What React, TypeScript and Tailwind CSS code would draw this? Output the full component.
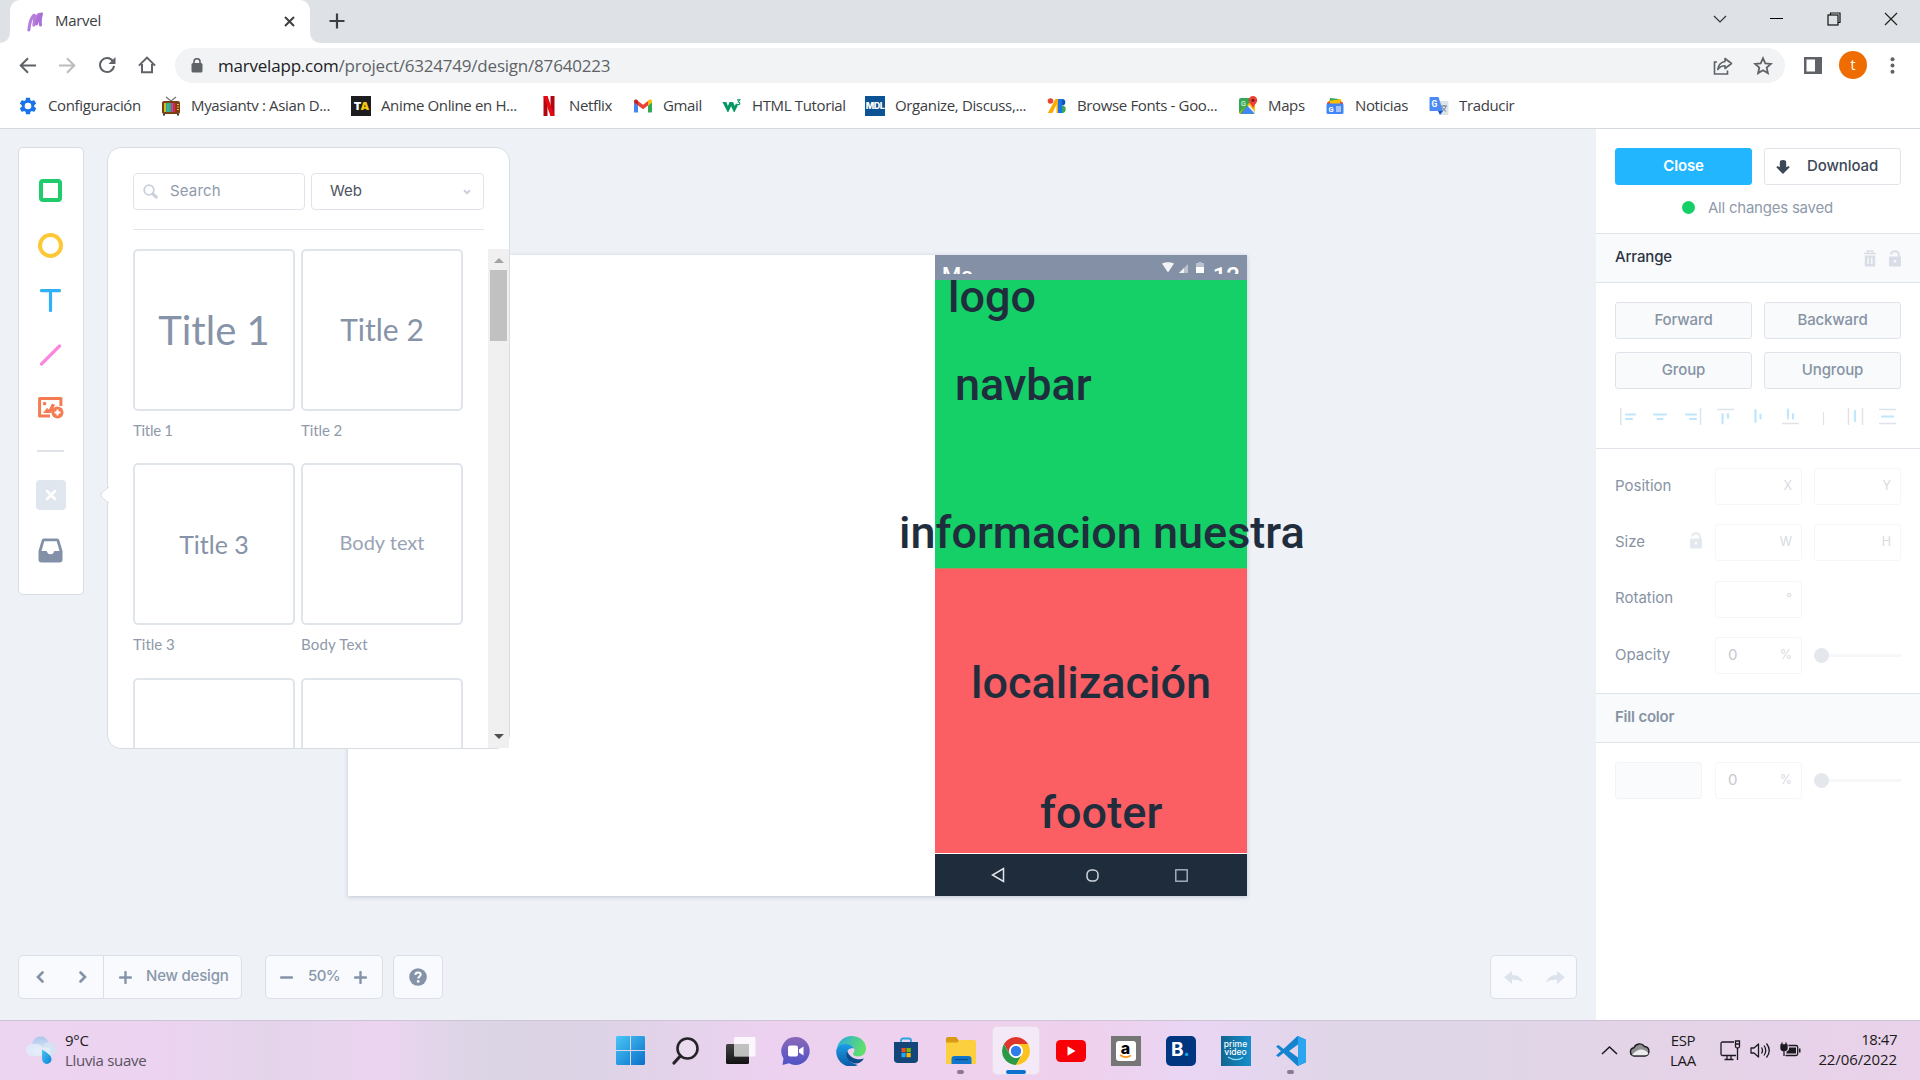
import React from "react";

type Kids = { children?: React.ReactNode };

/* ---------- bookmark icons (20x20 slot) ---------- */

const GearIcon = () => (
  <svg width="20" height="20" viewBox="0 0 24 24" fill="#1a73e8">
    <path d="M19.4 13c0-.3.1-.6.1-1s0-.7-.1-1l2.100-1.650c.2-.15.25-.42.12-.64l-2-3.460c-.12-.22-.39-.3-.61-.22l-2.490 1c-.52-.4-1.080-.73-1.690-.98l-.38-2.650A.49.49 0 0 0 14 2h-4c-.25 0-.46.18-.49.42l-.38 2.650c-.61.25-1.170.59-1.690.98l-2.490-1c-.23-.09-.49 0-.61.22l-2 3.460c-.13.22-.07.49.12.64L4.570 11c-.04.3-.07.65-.07 1s.03.7.07 1l-2.110 1.650c-.19.15-.24.42-.12.64l2 3.460c.12.22.39.3.61.22l2.490-1c.52.4 1.080.73 1.690.98l.38 2.650c.03.24.24.42.49.42h4c.25 0 .46-.18.49-.42l.38-2.650c.61-.25 1.170-.59 1.690-.98l2.490 1c.23.09.49 0 .61-.22l2-3.460c.12-.22.07-.49-.12-.64L19.400 13zM12 16a4 4 0 1 1 0-8 4 4 0 0 1 0 8z" />
  </svg>
);

const TvIcon = () => (
  <svg width="20" height="20" viewBox="0 0 20 20">
    <path d="M5 1l5 4 5-4" stroke="#777" strokeWidth="1.300" fill="none" />
    <rect x="1" y="5" width="18" height="13" rx="2" fill="#7a3f12" />
    <rect x="3" y="7" width="11.500" height="9" fill="#222" />
    <rect x="3" y="7" width="2.500" height="9" fill="#c9c417" />
    <rect x="5.500" y="7" width="2.500" height="9" fill="#27b5c8" />
    <rect x="8" y="7" width="2.200" height="9" fill="#31b54a" />
    <rect x="10.200" y="7" width="2.200" height="9" fill="#d63ad0" />
    <rect x="12.400" y="7" width="2.100" height="9" fill="#e0322c" />
    <path d="M16 8.500h2M16 11h2M16 13.500h2" stroke="#e8b04a" strokeWidth="1.200" />
    <path d="M3 18v1.500M17 18v1.500" stroke="#333" strokeWidth="2" />
  </svg>
);

const TaIcon = () => (
  <div className="flex h-5 w-5 items-center justify-center bg-[#1d1d1f] font-['Inter'] text-[11px] font-black tracking-[-1px]">
    <span className="text-white">T</span>
    <span className="text-[#f7c90f]">A</span>
  </div>
);

const NetflixIcon = () => (
  <svg width="20" height="20" viewBox="0 0 20 20">
    <path d="M4.500 0h4v20l-4 .001z" fill="#b1060f" />
    <path d="M11.500 0h4v20h-4z" fill="#b1060f" />
    <path d="M4.500 0h4l7 20h-4z" fill="#e50914" />
  </svg>
);

const GmailIcon = () => (
  <svg width="20" height="20" viewBox="0 0 20 20">
    <path d="M1 5v10.500c0 .6.400 1 1 1h3V9.500L1 6z" fill="#4285f4" />
    <path d="M19 5v10.500c0 .6-.4 1-1 1h-3V9.500l4-3.500z" fill="#34a853" />
    <path d="M5 9.500V5l5 3.800L15 5v4.500l-5 3.800z" fill="#ea4335" />
    <path d="M1 5.500C1 3.500 3 3 4.200 4L5 4.700v4.900L1 6.600z" fill="#c5221f" />
    <path d="M19 5.500c0-2-2-2.500-3.200-1.500l-.8.700v4.900l4-3z" fill="#fbbc04" />
  </svg>
);

const W3Icon = () => (
  <svg width="22" height="20" viewBox="0 0 22 20">
    <path d="M.5 5.500h4.200l1.800 4.600 1.800-4.600h3.900l1.800 4.600L15.500 7l1.800 2.700-3.500 6.800h-.8L10 10.200 7 16.500h-.9z" fill="#059862" />
    <path d="M16.500 3.300h3.200L18 5.500c2.200 0 2.200 3-.1 3-.8 0-1.400-.4-1.600-.8" fill="none" stroke="#059862" strokeWidth="1.200" />
  </svg>
);

const MdlIcon = () => (
  <div className="flex h-5 w-5 items-center justify-center bg-[#0b5394] font-['Inter'] text-[9px] font-extrabold tracking-[-0.5px] text-white">
    MDL
  </div>
);

const FontsIcon = () => (
  <svg width="20" height="20" viewBox="0 0 20 20">
    <circle cx="3.500" cy="5" r="2.800" fill="#ea4335" />
    <path d="M8.500 3h3.800L5.300 17H.8z" fill="#f9ab00" />
    <path d="M9.500 8L12 3v14H9.500z" fill="#f9ab00" />
    <rect x="11" y="3" width="4" height="14" fill="#1a73e8" />
    <path d="M15 3a3.300 3.300 0 0 1 0 6.600z" fill="#0d52bf" />
    <path d="M15 9.600a3.700 3.700 0 0 1 0 7.400z" fill="#34a853" />
  </svg>
);

const MapsIcon = () => (
  <svg width="20" height="20" viewBox="0 0 20 20">
    <rect x="1" y="2" width="16" height="16" rx="2" fill="#34a853" />
    <path d="M1 17L14 4l3 3v9L9 9 1.500 18z" fill="#fbbc04" />
    <path d="M9.500 10L17 17.500 3 18z" fill="#4285f4" />
    <path d="M10 10.500l1.500-1.500 6 7.500-.5 1.500z" fill="#e8eaed" />
    <text x="3" y="9.500" fontSize="7" fill="#fff" fontFamily="Roboto">G</text>
    <path d="M15 0a4.200 4.200 0 0 1 4.200 4.200c0 3-3.200 4.500-4.200 8.300-1-3.800-4.200-5.300-4.200-8.300A4.200 4.200 0 0 1 15 0z" fill="#ea4335" />
    <circle cx="15" cy="4.300" r="1.500" fill="#811411" />
  </svg>
);

const NewsIcon = () => (
  <svg width="20" height="20" viewBox="0 0 20 20">
    <path d="M5 2l9 1v5H4z" fill="#34a853" />
    <path d="M3 5l13-2 1 6H3z" fill="#fbbc04" />
    <path d="M2 6.500l3-1v4H2zM18 6.500l-3-1v4h3z" fill="#ea4335" />
    <rect x="1.500" y="7.500" width="17" height="10.500" rx="1.500" fill="#4285f4" />
    <text x="3.500" y="15.500" fontSize="7.500" fontWeight="700" fill="#fff" fontFamily="Roboto">G</text>
    <path d="M11 11h5M11 13h5M11 15h5" stroke="#fff" strokeWidth="1.100" />
  </svg>
);

const TranslateIcon = () => (
  <svg width="20" height="20" viewBox="0 0 20 20">
    <path d="M8 5h10.500c.6 0 1 .4 1 1v12c0 .6-.4 1-1 1H12z" fill="#dfe3e8" />
    <path d="M12 10h6M15 9v1M17 10c-.5 2.500-2.500 4-4 5M13.500 11.500c.8 1.800 2 3 3.500 3.800" stroke="#6b7a8c" strokeWidth="1" fill="none" />
    <path d="M1.500 1h8l4.500 14H1.500c-.6 0-1-.4-1-1V2c0-.6.400-1 1-1z" fill="#4c8bf5" />
    <path d="M9 15h5l-3 4z" fill="#1a4fc0" />
    <text x="2.600" y="10.500" fontSize="8.500" fontWeight="700" fill="#fff" fontFamily="Roboto">G</text>
  </svg>
);

const bookmarks: { label: string; width: string; icon: React.ReactNode }[] = [
  { label: "Configuración", width: "w-[143px]", icon: <GearIcon /> },
  { label: "Myasiantv : Asian D...", width: "w-[190px]", icon: <TvIcon /> },
  { label: "Anime Online en H...", width: "w-[188px]", icon: <TaIcon /> },
  { label: "Netflix", width: "w-[94px]", icon: <NetflixIcon /> },
  { label: "Gmail", width: "w-[89px]", icon: <GmailIcon /> },
  { label: "HTML Tutorial", width: "w-[143px]", icon: <W3Icon /> },
  { label: "Organize, Discuss,...", width: "w-[182px]", icon: <MdlIcon /> },
  { label: "Browse Fonts - Goo...", width: "w-[191px]", icon: <FontsIcon /> },
  { label: "Maps", width: "w-[87px]", icon: <MapsIcon /> },
  { label: "Noticias", width: "w-[104px]", icon: <NewsIcon /> },
  { label: "Traducir", width: "w-[90px]", icon: <TranslateIcon /> },
];

/* ---------- browser chrome ---------- */

function TabStrip() {
  return (
    <div className="flex h-[43px] items-start justify-between bg-[#dee1e6]">
      <div className="flex items-center">
        <div className="relative ml-[10px] flex h-[43px] w-[300px] items-center rounded-t-[10px] bg-white pr-[13px] pl-[17px]">
          <svg className="absolute bottom-0 -left-[10px]" width="10" height="10">
            <path d="M10 0v10H0A10 10 0 0 0 10 0z" fill="#fff" />
          </svg>
          <svg className="absolute -right-[10px] bottom-0" width="10" height="10">
            <path d="M0 0v10h10A10 10 0 0 1 0 0z" fill="#fff" />
          </svg>
          <svg width="17" height="20" viewBox="0 0 17 20" fill="none" stroke="#b57edc" strokeWidth="3" strokeLinecap="round" strokeLinejoin="round">
            <path d="M1.800 18C2.500 12 4.500 5 7 3.200c1.500-.5.300 6.300-.2 10C8.200 8 9.500 3.500 12 2.300" />
            <path d="M9.500 12C10.500 8 12 4 14.500 1.800c-1 3.200-1.500 7-1 11.200" stroke="#a970d8" />
          </svg>
          <span className="mb-[3px] ml-[11px] flex-1 text-[15px] tracking-[-0.28px] text-[#3c4043]">Marvel</span>
          <svg width="13" height="13" viewBox="0 0 13 13" className="mr-px">
            <path d="M2 2l9 9M11 2l-9 9" stroke="#3c4043" strokeWidth="2" />
          </svg>
        </div>
        <svg className="-mt-px ml-[19px]" width="16" height="16" viewBox="0 0 16 16">
          <path d="M8 .5v15M.5 8h15" stroke="#3c4043" strokeWidth="2.200" />
        </svg>
      </div>
      <div className="flex h-[37px] items-center text-black">
        <div className="flex w-[57px] justify-center">
          <svg width="14" height="8" viewBox="0 0 14 8"><path d="M1 1l6 6 6-6" stroke="#333" strokeWidth="1.200" fill="none" /></svg>
        </div>
        <div className="flex w-[57px] justify-center"><div className="h-px w-[13px] bg-black" /></div>
        <div className="flex w-[57px] justify-center">
          <svg width="14" height="14" viewBox="0 0 14 14" fill="none" stroke="#111" strokeWidth="1.200">
            <path d="M3.500 3V1h9.500v9.500h-2" /><rect x="1" y="3" width="10" height="10" />
          </svg>
        </div>
        <div className="flex w-[58px] justify-center">
          <svg width="14" height="14" viewBox="0 0 14 14"><path d="M1 1l12 12M13 1L1 13" stroke="#222" strokeWidth="1.200" /></svg>
        </div>
      </div>
    </div>
  );
}

function AddressBar() {
  return (
    <div className="flex h-[45px] items-center bg-white pb-px pl-[19px]">
      <div className="flex w-[156px] items-center text-[#5f6368]">
        <svg width="17" height="17" viewBox="0 0 17 17" fill="none" stroke="#5f6368" strokeWidth="2"><path d="M17 8.500H2M9 1.200L1.700 8.500 9 15.800" /></svg>
        <svg className="ml-[23px]" width="17" height="17" viewBox="0 0 17 17" fill="none" stroke="#babcbe" strokeWidth="2"><path d="M0 8.500h15M8 1.200l7.300 7.300L8 15.800" /></svg>
        <svg className="ml-[22px]" width="18" height="18" viewBox="0 0 18 18"><path d="M14.800 5A7 7 0 1 0 16 9.800" fill="none" stroke="#5f6368" strokeWidth="2" /><path d="M17.500 1v7h-7z" fill="#5f6368" /></svg>
        <svg className="ml-[22px]" width="18" height="18" viewBox="0 0 18 18" fill="none" stroke="#5f6368" strokeWidth="2"><path d="M4 8v8.200h10V8M.9 9.600L9 1.600l8.100 8" /></svg>
      </div>
      <div className="mt-px flex h-[35px] w-[1610px] items-center rounded-full bg-[#f1f3f4] pr-[12px] pl-[16px]">
        <svg width="12" height="15" viewBox="0 0 12 15"><rect x="0.500" y="5" width="11" height="9.500" rx="1.500" fill="#5f6368" /><path d="M3 6V3.700a3 3 0 0 1 6 0V6" stroke="#5f6368" strokeWidth="1.600" fill="none" /></svg>
        <span className="ml-[15px] flex-1 text-[17px] tracking-[-0.21px] text-[#5f6368]">
          <span className="text-[#202124]">marvelapp.com</span>/project/6324749/design/87640223
        </span>
        <svg width="20" height="18" viewBox="0 0 20 18" fill="none" stroke="#5f6368" strokeWidth="1.600"><path d="M4 5H1.500v12h13v-3.500" /><path d="M12 1.500l6.500 5-6.500 5V8.800c-3.500 0-5.500 1.200-7.200 3.700.5-4 2.700-7.300 7.200-8z" strokeLinejoin="round" /></svg>
        <svg className="ml-5" width="20" height="19" viewBox="0 0 20 19" fill="none" stroke="#5f6368" strokeWidth="1.800"><path d="M10 2.200l2.300 5.100 5.600.6-4.200 3.700 1.200 5.500-4.900-2.900-4.900 2.900 1.200-5.500L2.100 7.900l5.600-.6z" /></svg>
      </div>
      <svg className="ml-[19px]" width="18" height="17" viewBox="0 0 18 17"><path d="M0 0h18v17H0zM2.500 2.500v12h8.500v-12z" fill="#5f6368" fillRule="evenodd" /></svg>
      <div className="ml-[17px] flex h-7 w-7 items-center justify-center rounded-full bg-[#ef6c00] pb-px text-[14px] text-white">t</div>
      <svg className="ml-[23px]" width="5" height="17" viewBox="0 0 5 17" fill="#5f6368"><circle cx="2.500" cy="2.300" r="2" /><circle cx="2.500" cy="8.500" r="2" /><circle cx="2.500" cy="14.700" r="2" /></svg>
    </div>
  );
}

function Bookmarks() {
  return (
    <div className="flex h-[41px] items-center border-b border-[#d3d9df] bg-white pb-[4px] pl-[18px]">
      {bookmarks.map((b) => (
        <div key={b.label} className={`flex shrink-0 items-center ${b.width}`}>
          <div className="flex w-[20px] shrink-0 justify-center">{b.icon}</div>
          <span className="mb-px ml-[10px] text-[15px] tracking-[-0.36px] whitespace-nowrap text-[#3c4043]">{b.label}</span>
        </div>
      ))}
    </div>
  );
}

/* ---------- editor: left side ---------- */

function Toolbox() {
  return (
    <div className="flex h-[448px] w-[66px] flex-col items-center rounded-[5px] border border-[#d8dce3] bg-white pr-px">
      <div className="mt-[31px] h-[23px] w-[23px] rounded-[4px] border-4 border-[#1fcb6b]" />
      <div className="mt-[31px] h-[25px] w-[25px] rounded-full border-4 border-[#fcc838]" />
      <svg className="mt-[31px]" width="21" height="23" viewBox="0 0 21 23"><path d="M1.500 1.600h18M10.500 2v19.500" stroke="#2fb0f7" strokeWidth="3.200" strokeLinecap="round" /></svg>
      <svg className="mt-[32px]" width="23" height="22" viewBox="0 0 23 22"><path d="M2.500 20L20.500 2" stroke="#fa87df" strokeWidth="3.200" strokeLinecap="round" /></svg>
      <svg className="mt-[31px]" width="26" height="22" viewBox="0 0 26 22">
        <path d="M12 19H1.600V1.500h21.300V9" fill="none" stroke="#f47b52" strokeWidth="3" strokeLinejoin="round" />
        <rect x="5" y="5" width="3.200" height="3.200" rx="1" fill="#f47b52" />
        <path d="M5 16l4-5 2 1.500 3-6 3 1.500-4 8z" fill="#f47b52" />
        <circle cx="19.500" cy="15.500" r="6" fill="#f47b52" />
        <path d="M19.500 12.500v6M16.500 15.500h6" stroke="#fff" strokeWidth="2" />
      </svg>
      <div className="mt-[31px] h-[2px] w-[27px] bg-[#dfe3e9]" />
      <div className="mt-[28px] flex h-[30px] w-[30px] items-center justify-center rounded-[4px] bg-[#dfe6ee]">
        <svg width="12" height="12" viewBox="0 0 12 12"><path d="M2 2l8 8M10 2l-8 8" stroke="#fff" strokeWidth="2.600" strokeLinecap="round" /></svg>
      </div>
      <svg className="mt-[28px] mr-px" width="25" height="25" viewBox="0 0 25 25">
        <path d="M6 .5h13c1.200 0 2 .7 2.300 1.800L24.500 13v8.500c0 1.800-1 3-3 3h-18c-2 0-3-1.200-3-3V13L3.700 2.300C4 1.200 4.800.5 6 .5zM6.300 3.200L3.500 13H8c.8 0 1 .5 1.300 1.300.4 1.200 1.200 1.900 3.200 1.900s2.800-.7 3.200-1.900c.3-.8.500-1.300 1.300-1.300h4.500L18.700 3.200z" fill="#8291a7" fillRule="evenodd" />
      </svg>
    </div>
  );
}

const Card = ({ children, caption, captionClass = "" }: Kids & { caption?: string; captionClass?: string }) => (
  <div className="flex h-[214.3px] w-[162px] flex-col font-['Lato']">
    <div className="flex h-[162px] shrink-0 items-center justify-center rounded-[5px] border-2 border-[#e0e5ec] bg-white text-[#8793a8]">{children}</div>
    <span className={`mt-[10px] text-[15px] leading-[18px] text-[#8f99aa] ${captionClass}`}>{caption}</span>
  </div>
);

function LibraryPanel() {
  return (
    <div className="relative ml-[23px] flex h-[602px] w-[403px] flex-col rounded-[14px] border border-[#d8dce3] bg-white">
      <svg className="absolute top-[338px] -left-[8px]" width="9" height="18" viewBox="0 0 9 18">
        <path d="M9 1C6 3.500.8 6.500.8 9S6 14.500 9 17" fill="#fff" stroke="#d8dce3" />
      </svg>
      <div className="mx-[25px] flex h-[82px] items-start gap-[6px] border-b border-[#e0e5ec] pt-[25px]">
        <div className="flex h-[37px] w-[172px] items-center rounded-[4px] border border-[#e0e4ea] pl-[9px]">
          <svg width="15" height="15" viewBox="0 0 15 15"><circle cx="6" cy="6" r="4.800" fill="none" stroke="#c9d0dc" strokeWidth="1.800" /><path d="M9.800 9.800l3.500 3.300" stroke="#c9d0dc" strokeWidth="3" strokeLinecap="round" /></svg>
          <span className="ml-[12px] text-[15px] tracking-[0.15px] text-[#8f99aa]">Search</span>
        </div>
        <div className="flex h-[37px] w-[173px] items-center justify-between rounded-[4px] border border-[#e0e4ea] pr-[12px] pl-[18px]">
          <span className="text-[15px] text-[#4c5360]">Web</span>
          <svg width="8" height="6" viewBox="0 0 8 6"><path d="M1 1.200l3 3 3-3" fill="none" stroke="#c9d0dc" strokeWidth="2" /></svg>
        </div>
      </div>
      <div className="mt-[19px] flex h-[499px] justify-between overflow-hidden pl-[25px]">
        <div className="grid grid-cols-[162px_162px] content-start gap-x-[6px]">
          <Card caption="Title 1" captionClass="tracking-[-0.3px]"><span className="text-[40px]">Title 1</span></Card>
          <Card caption="Title 2" captionClass="-tracking-[0.1px]"><span className="pb-[2px] text-[30px]">Title 2</span></Card>
          <Card caption="Title 3"><span className="text-[25px]">Title 3</span></Card>
          <Card caption="Body Text" captionClass="tracking-[0.2px]"><span className="pb-[5px] text-[20px] text-[#98a3b4]">Body text</span></Card>
          <Card />
          <Card />
        </div>
        <div className="flex w-[21px] flex-col items-center justify-between rounded-br-[2px] bg-[#f0f0f0]">
          <div className="flex flex-col items-center">
            <svg className="mt-[9px]" width="10" height="5"><path d="M5 0l5 5H0z" fill="#a3a3a3" /></svg>
            <div className="mt-[7px] h-[71px] w-[17px] bg-[#c1c1c1]" />
          </div>
          <svg className="mb-[9px]" width="10" height="5"><path d="M0 0h10L5 5z" fill="#505050" /></svg>
        </div>
      </div>
    </div>
  );
}

/* ---------- artboard: elements placed freely on the canvas ---------- */

const BoardText = ({ children, place }: Kids & { place: string }) => (
  <div className={`absolute font-['Roboto'] text-[45px] leading-[54px] font-medium whitespace-nowrap text-[#1f2d3d] ${place}`}>{children}</div>
);

function Artboard() {
  return (
    <div className="absolute top-[126px] left-[348px] h-[641px] w-[899px] bg-white shadow-[0_1px_4px_rgba(60,80,110,0.25)]">
      <div className="absolute top-[25px] left-[587px] h-[288px] w-[312px] bg-[#15cf67]" />
      <div className="absolute top-[313px] left-[587px] h-[285px] w-[312px] border-t border-[#b38a5c] bg-[#fb5e63]" />
      <BoardText place="top-[15px] left-[600px]">logo</BoardText>
      <BoardText place="top-[103px] left-[607px]">navbar</BoardText>
      <BoardText place="top-[251px] left-[551px]">informacion nuestra</BoardText>
      <BoardText place="top-[401px] left-[623px]">localización</BoardText>
      <BoardText place="top-[531px] left-[692px] tracking-[0.1px]">footer</BoardText>
      <div className="absolute top-0 left-[587px] flex h-[25px] w-[312px] items-start justify-between bg-[#8390a5] pr-[7px] pl-[7px] font-['Roboto'] text-[22px] leading-[26px] font-medium text-white">
        <div className="mt-[8px] h-[11px] overflow-hidden">Ma</div>
        <div className="flex items-start">
          <svg className="mt-[7px]" width="12" height="11" viewBox="0 0 12 11"><path d="M0 1.500Q6-1 12 1.500L6 10.500z" fill="#fff" fillOpacity=".9" /></svg>
          <svg className="mt-[9px] ml-[5px]" width="9" height="9" viewBox="0 0 9 9"><path d="M9 0v9H0z" fill="#fff" fillOpacity=".45" /><path d="M5 4v5H0z" fill="#fff" fillOpacity=".8" /></svg>
          <svg className="mt-[7px] ml-[8px]" width="8" height="11" viewBox="0 0 8 11"><path d="M0 1h2.500V0h3v1H8v4H0z" fill="#fff" fillOpacity=".45" /><path d="M0 5h8v6H0z" fill="#fff" /></svg>
          <div className="mt-[8px] ml-[9px] h-[11px] overflow-hidden text-[24px]">12</div>
        </div>
      </div>
      <div className="absolute top-[599px] left-[587px] flex h-[42px] w-[312px] items-center bg-[#1e2c3c]">
        <svg className="ml-[56px]" width="14" height="16" viewBox="0 0 14 16"><path d="M12.500 1.500v13L1.500 8z" fill="none" stroke="#e3e6ea" strokeWidth="1.500" /></svg>
        <svg className="ml-[81px]" width="13" height="13" viewBox="0 0 13 13"><rect x="1" y="1" width="11" height="11" rx="4.500" fill="none" stroke="#cfd5db" strokeWidth="1.500" /></svg>
        <svg className="ml-[76px]" width="13" height="13" viewBox="0 0 13 13"><rect x=".8" y=".8" width="11.400" height="11.400" fill="none" stroke="#b8c0c8" strokeWidth="1.300" /></svg>
      </div>
    </div>
  );
}

/* ---------- editor: bottom bar ---------- */

const BarBox = ({ children, size }: Kids & { size: string }) => (
  <div className={`flex h-[44px] items-center rounded-[5px] border border-[#dbe0e8] bg-[#f8fafd] text-[15px] font-medium text-[#8a97aa] ${size}`}>{children}</div>
);

const Plus = ({ className = "" }: { className?: string }) => (
  <svg className={className} width="13" height="13" viewBox="0 0 13 13"><path d="M6.500 1v11M1 6.500h11" stroke="#8593a8" strokeWidth="2.400" strokeLinecap="round" /></svg>
);

function BottomBar() {
  return (
    <div className="flex items-center">
      <BarBox size="w-[224px]">
        <div className="flex h-full w-[85px] items-center justify-between border-r border-[#dbe0e8] pr-[16px] pl-[17px]">
          <svg width="8" height="12" viewBox="0 0 8 12"><path d="M6.500 1.500L2 6l4.500 4.500" fill="none" stroke="#8593a8" strokeWidth="2.600" strokeLinecap="round" /></svg>
          <svg width="8" height="12" viewBox="0 0 8 12"><path d="M1.500 1.500L6 6l-4.500 4.500" fill="none" stroke="#8593a8" strokeWidth="2.600" strokeLinecap="round" /></svg>
        </div>
        <Plus className="ml-[15px]" />
        <span className="mb-[2px] ml-[14px] tracking-[-0.2px]">New design</span>
      </BarBox>
      <BarBox size="ml-[23px] w-[118px]">
        <svg className="ml-[14px]" width="13" height="3"><path d="M1 1.500h11" stroke="#8593a8" strokeWidth="2.400" strokeLinecap="round" /></svg>
        <span className="mb-[2px] ml-[15px] w-[46px] tracking-[-0.6px]">50%</span>
        <Plus />
      </BarBox>
      <BarBox size="ml-[10px] w-[50px] justify-center">
        <svg width="18" height="18" viewBox="0 0 18 18"><circle cx="9" cy="9" r="8.800" fill="#8593a8" /><path d="M6.300 6.900c.1-1.700 1.200-2.500 2.700-2.500 1.600 0 2.700.9 2.700 2.200 0 1.900-2.500 1.800-2.500 3.900" fill="none" stroke="#fff" strokeWidth="2" /><circle cx="9.200" cy="13.400" r="1.300" fill="#fff" /></svg>
      </BarBox>
      <BarBox size="ml-auto w-[87px] justify-center gap-[23px] pl-px">
        <svg width="19" height="13" viewBox="0 0 19 13"><path d="M0 6.300L8 0v4c5.500 0 9.500 2.500 11 7.500C16 9 12.500 8.500 8 8.700V13z" fill="#dde3ec" /></svg>
        <svg width="19" height="13" viewBox="0 0 19 13"><path d="M19 6.300L11 0v4C5.500 4 1.500 6.500 0 11.500 3 9 6.500 8.500 11 8.700V13z" fill="#dde3ec" /></svg>
      </BarBox>
    </div>
  );
}

/* ---------- editor: right sidebar ---------- */

const SideButton = ({ children, look = "border-[#e0e4ea] bg-[#f8fafc] text-[#8793a4]" }: Kids & { look?: string }) => (
  <div className={`flex h-[37px] w-[137px] items-center justify-center rounded-[3px] border pb-px text-[15px] font-medium tracking-[-0.13px] ${look}`}>{children}</div>
);

const OpenLock = ({ color }: { color: string }) => (
  <svg width="12" height="17" viewBox="0 0 12 17"><path d="M2.200 4.500C2.200 2.300 3.800 1.300 6 1.300c2.400 0 3.800 1.300 3.800 3.500V7" fill="none" stroke={color} strokeWidth="2" /><path d="M1 6.500h10c.6 0 1 .4 1 1v8c0 .6-.4 1-1 1H1c-.6 0-1-.4-1-1v-8c0-.6.4-1 1-1zM6 10a1.300 1.300 0 1 0 0 2.600A1.300 1.300 0 0 0 6 10z" fill={color} fillRule="evenodd" /></svg>
);

const Field = ({ unit, value = "" }: { unit: string; value?: string }) => (
  <div className="flex h-[37px] w-[87px] shrink-0 items-center justify-between rounded-[3px] border border-[#f5f6f8] pr-[9px] pl-[12px]">
    <span className="text-[15px] text-[#c6c9ce]">{value}</span>
    <span className="text-[12.5px] text-[#d8dbe0]">{unit}</span>
  </div>
);

const Slider = () => (
  <div className="flex w-[87px] items-center">
    <div className="h-[15px] w-[15px] rounded-full bg-[#e4e7ec]" />
    <div className="h-[3px] flex-1 bg-[#f6f7f9]" />
  </div>
);

const Row = ({ label, children, lock = false }: Kids & { label: string; lock?: boolean }) => (
  <div className="flex h-[56.300px] items-start">
    <div className="flex h-[36px] w-[100px] items-center justify-between pr-[13px]">
      <span className="text-[15px] text-[#8793a4]">{label}</span>
      {lock && <div className="pb-[3px]"><OpenLock color="#e3e7ee" /></div>}
    </div>
    <div className="flex items-center gap-[12px]">{children}</div>
  </div>
);

const B = "#bfe6fb";
const G = "#dfe3e9";
function AlignIcons() {
  return (
    <svg className="mt-[19px] ml-[5px]" width="280" height="18" viewBox="0 0 280 18" fill="none" strokeWidth="2">
      <path d="M.8 0v17M80.500 0v17M97 1.500h17M162 15.500h17M228.500 0v17M242.500 0v17M259 1.500h17M259 15.500h17" stroke={G} strokeWidth="1.500" />
      <path d="M203.500 4v13" stroke={G} strokeWidth="1.200" />
      <path d="M6 6.500h9M6 11h6M34 6.500h12M37.500 11h5M66 6.500h10M70 11h6M102.500 6v9.500M108 6v4M135.500 2v12M140.500 6.500v4M168 1.500v9M173 6v4.500M235 3v10M262 8.500h11" stroke={B} strokeWidth="2.200" strokeLinecap="round" />
    </svg>
  );
}

function Sidebar() {
  return (
    <div className="flex w-[324px] flex-col bg-white">
      <div className="h-[105px] border-b border-[#e0e4ea] px-[19px] pt-[19px]">
        <div className="flex gap-[12px]">
          <SideButton look="border-[#22b6ff] bg-[#22b6ff] text-white font-semibold">Close</SideButton>
          <div className="flex h-[37px] w-[137px] items-center rounded-[3px] border border-[#e0e4ea] pb-px pl-[11px] text-[15px] font-medium tracking-[-0.1px] text-[#3c4858]">
            <svg className="mt-[2px]" width="14" height="14" viewBox="0 0 14 14"><path d="M7 14L.3 7.300 1.500 6 3.800 7.200V2.500a3.200 2.400 0 0 1 6.400 0v4.700L12.500 6l1.200 1.300z" fill="#3c4858" /></svg>
            <span className="ml-[17px]">Download</span>
          </div>
        </div>
        <div className="mt-[12px] ml-[67px] flex items-center">
          <div className="h-[13px] w-[13px] rounded-full bg-[#15cf67]" />
          <span className="mt-px ml-[13px] text-[15px] leading-[20px] tracking-[-0.23px] text-[#8f9aab]">All changes saved</span>
        </div>
      </div>
      <div className="flex h-[49px] items-center border-b border-[#e0e4ea] bg-[#f8fafc] pr-[19px] pl-[19px]">
        <span className="mb-px flex-1 text-[15px] font-medium tracking-[-0.14px] text-[#2c3442]">Arrange</span>
        <svg width="12" height="17" viewBox="0 0 12 17"><path d="M0 3.500h12M3.500 3V1h5v2" fill="none" stroke="#d9dee6" strokeWidth="1.600" /><path d="M.8 5.500h10.400V15c0 1-.6 1.500-1.500 1.500H2.300C1.400 16.500.8 16 .8 15z" fill="#d9dee6" /><path d="M4.200 7.500V14M7.800 7.500V14" stroke="#f8fafc" strokeWidth="1.300" /></svg>
        <div className="ml-[13px]"><OpenLock color="#d9dee6" /></div>
      </div>
      <div className="h-[166px] border-b border-[#e0e4ea] px-[19px] pt-[19px]">
        <div className="grid grid-cols-[137px_137px] gap-x-[12px] gap-y-[13px]">
          <SideButton>Forward</SideButton>
          <SideButton>Backward</SideButton>
          <SideButton>Group</SideButton>
          <SideButton>Ungroup</SideButton>
        </div>
        <AlignIcons />
      </div>
      <div className="h-[245px] border-b border-[#e0e4ea] px-[19px] pt-[19px]">
        <Row label="Position"><Field unit="X" /><Field unit="Y" /></Row>
        <Row label="Size" lock><Field unit="W" /><Field unit="H" /></Row>
        <Row label="Rotation"><Field unit="°" /></Row>
        <Row label="Opacity"><Field unit="%" value="0" /><Slider /></Row>
      </div>
      <div className="flex h-[49px] items-center border-b border-[#e0e4ea] bg-[#f8fafc] pl-[19px]">
        <span className="mb-[2px] text-[15px] font-semibold tracking-[-0.2px] text-[#8793a4]">Fill color</span>
      </div>
      <div className="flex items-center gap-[12px] px-[19px] pt-[19px]">
        <div className="mr-px h-[37px] w-[87px] rounded-[3px] border border-[#f1f3f5] bg-[#fafbfc]" />
        <Field unit="%" value="0" />
        <Slider />
      </div>
    </div>
  );
}

/* ---------- Windows taskbar ---------- */

const Slot = ({ children, dot = false }: Kids & { dot?: boolean }) => (
  <div className="relative flex h-[59px] w-[55px] items-center justify-center">
    {children}
    {dot && <div className="absolute bottom-[6px] left-[24px] h-[4px] w-[7px] rounded-full bg-[#8a7a90]" />}
  </div>
);

function TaskApps() {
  return (
    <div className="ml-[425px] flex">
      <Slot>
        <svg width="29" height="29" viewBox="0 0 29 29">
          <defs><linearGradient id="win" x1="0" y1="0" x2="1" y2="1"><stop offset="0" stopColor="#49c7f6" /><stop offset="1" stopColor="#0a6fc9" /></linearGradient></defs>
          <path d="M1 0h13v14H0V1zM15 0h13l1 1v13H15zM0 15h14v14H1l-1-1zM15 15h14v13l-1 1H15z" fill="url(#win)" />
        </svg>
      </Slot>
      <Slot>
        <svg width="28" height="28" viewBox="0 0 28 28" fill="none" stroke="#262329" strokeLinecap="round"><circle cx="15.500" cy="11.500" r="10" strokeWidth="2.600" fill="#efe2f3" fillOpacity=".6" /><path d="M8.300 19L2 26" strokeWidth="3.200" /></svg>
      </Slot>
      <Slot>
        <svg width="30" height="28" viewBox="0 0 30 28"><defs><linearGradient id="tv" x1="0" y1="0" x2="0" y2="1"><stop offset="0" stopColor="#444" /><stop offset="1" stopColor="#111" /></linearGradient></defs><rect x="0" y="7" width="23" height="20" rx="1.500" fill="url(#tv)" /><rect x="8" y="0" width="21.500" height="19.500" rx="1.500" fill="#fff" fillOpacity=".82" /><rect x="8" y="7" width="15" height="12.500" fill="#aaa" fillOpacity=".55" /></svg>
      </Slot>
      <Slot>
        <svg width="29" height="28" viewBox="0 0 29 28"><defs><linearGradient id="chat" x1="0" y1="0" x2="0" y2="1"><stop offset="0" stopColor="#8a68b8" /><stop offset="1" stopColor="#4f52c5" /></linearGradient></defs><path d="M14.500 0A14 14 0 1 1 8 26.300L1.500 28l1-6.500A14 14 0 0 1 14.500 0z" fill="url(#chat)" /><rect x="7" y="8.500" width="10" height="11" rx="2" fill="#fff" /><path d="M18 12.500l4.500-3v9l-4.500-3z" fill="#fff" /></svg>
      </Slot>
      <Slot>
        <svg width="30" height="30" viewBox="0 0 30 30">
          <defs>
            <linearGradient id="e1" x1="0" y1="0" x2="1" y2=".3"><stop offset="0" stopColor="#2aa8e8" /><stop offset="1" stopColor="#5fdf6a" /></linearGradient>
            <linearGradient id="e2" x1="0" y1="0" x2="0" y2="1"><stop offset="0" stopColor="#1b9fe6" /><stop offset="1" stopColor="#0c59a4" /></linearGradient>
          </defs>
          <path d="M1 12C2.500 5 8 0 15.500 0 24 0 30 5.500 30 12.500c0 5-3.500 8-8 8-3 0-5-1-5-2.500 0-1.200 1.500-1.700 1.500-4 0-2.800-2.800-5-7-5C6 9 2 11 1 12z" fill="url(#e1)" />
          <path d="M.2 15C.5 10.500 5 7.500 10.500 8c3.500.3 6.500 2 7.500 4.500-4.500-1-8 2-7 7 1 5.500 6 8.500 11 9.500A15 15 0 0 1 .2 15z" fill="url(#e2)" />
          <path d="M11 14.500c-1.800 5 .5 10.500 6 12.500 4 1.400 8 .3 11-4.500-5 2-14.500.5-17-8z" fill="#0d4a8c" />
        </svg>
      </Slot>
      <Slot>
        <svg width="24" height="27" viewBox="0 0 24 27"><path d="M7 7V3.500C7 2 8 1.500 9 1.500h6c1 0 2 .5 2 2V7" fill="none" stroke="#2ba3e0" strokeWidth="1.800" /><path d="M0 5h24v17.500c0 2-1.500 3.500-3.500 3.500h-17C1.500 26 0 24.500 0 22.500z" fill="#14467a" /><path d="M7.500 11h4.200v4.200H7.500z" fill="#f25022" /><path d="M12.500 11h4.200v4.200h-4.200z" fill="#7fba00" /><path d="M7.500 16h4.200v4.200H7.500z" fill="#22a7f0" /><path d="M12.500 16h4.200v4.200h-4.200z" fill="#ffb900" /></svg>
      </Slot>
      <Slot dot>
        <svg className="-mt-px" width="30" height="27" viewBox="0 0 30 27"><path d="M0 2C0 .8.800 0 2 0h8l3 3.500v4H0z" fill="#d99a12" /><path d="M0 5.500h11l3-2.500h14c1.200 0 2 .8 2 2v22H0z" fill="#fccf3f" /><path d="M5.500 27v-5c0-2 1-3 3-3h14c2 0 3 1 3 3v5z" fill="#1277cc" /><path d="M9 22.500h13" stroke="#0a4f94" strokeWidth="1.400" /></svg>
      </Slot>
      <Slot>
        <div className="flex h-[49px] w-[48px] items-center justify-center rounded-[5px] border border-[#eadcef] bg-[#f4e9f6]">
          <svg width="28" height="28" viewBox="0 0 28 28">
            <circle cx="14" cy="14" r="14" fill="#fff" />
            <path d="M1.880 7A14 14 0 0 1 26.120 7H14a7 7 0 0 0-6.060 10.500z" fill="#e0352b" />
            <path d="M1.880 7A14 14 0 0 0 14 28l6.060-10.500A7 7 0 0 1 7.940 17.500z" fill="#2a9a48" />
            <path d="M26.120 7A14 14 0 0 1 14 28l6.060-10.500A7 7 0 0 0 14 7z" fill="#fcc31e" />
            <circle cx="14" cy="14" r="6.600" fill="#fff" /><circle cx="14" cy="14" r="5.200" fill="#2f7de9" />
          </svg>
        </div>
        <div className="absolute bottom-[6px] left-[18px] h-[4px] w-[20px] rounded-full bg-[#0b72ce]" />
      </Slot>
      <Slot>
        <svg width="30" height="22" viewBox="0 0 30 22"><rect width="30" height="22" rx="4.500" fill="#f80006" /><path d="M11.500 6.300l8 4.700-8 4.700z" fill="#fff" /></svg>
      </Slot>
      <Slot>
        <div className="flex h-[30px] w-[30px] items-center justify-center bg-[#767676]">
          <div className="relative flex h-[20px] w-[20px] items-center justify-center rounded-[3px] bg-white pb-[5px] font-['Inter'] text-[16px] font-extrabold text-black">
            a
            <svg className="absolute bottom-[2px] left-[3px]" width="14" height="5" viewBox="0 0 14 5"><path d="M1 1q5.500 4 11 .5" fill="none" stroke="#f7981d" strokeWidth="1.600" /></svg>
          </div>
        </div>
      </Slot>
      <Slot>
        <div className="flex h-[30px] w-[30px] items-center justify-center rounded-[5px] bg-[#003580] font-['Inter'] text-[19px] font-bold text-white">
          B<span className="text-[#12a5e8]">.</span>
        </div>
      </Slot>
      <Slot>
        <div className="flex h-[30px] w-[30px] flex-col items-center justify-center bg-linear-to-r from-[#12648f] to-[#1590cc] font-['Inter'] text-[8.500px] leading-[8px] font-medium text-white">
          <span>prime</span>
          <span>video</span>
          <svg width="18" height="5" viewBox="0 0 18 5"><path d="M1 1q8 5 15 .5" fill="none" stroke="#8fe0ff" strokeWidth="1.300" /></svg>
        </div>
      </Slot>
      <Slot dot>
        <svg width="30" height="30" viewBox="0 0 30 30"><path d="M21.500 0L30 3.800v22.400L21.500 30 7.500 17l-5 4L0 19.500 5 15 0 10.500 2.500 9l5 4zm.5 8.500L13 15l9 6.500z" fill="#1583cf" fillRule="evenodd" /><path d="M22 0l8 3.800v22.400L22 30z" fill="#2ba5f0" /></svg>
      </Slot>
    </div>
  );
}

function Taskbar() {
  return (
    <div className="flex h-[60px] items-center border-t border-[#cfc3d6] bg-[linear-gradient(90deg,#ecd5f0_0%,#ecd3f1_8%,#e4d4ea_14%,#ebd4f0_20%,#dbd5e5_25%,#ddd3e6_31%,#ecd2f0_40%,#efd0ec_56%,#e9d5f4_62%,#dfd6e7_70%,#dfd6e7_77%,#e4d4e8_85%,#e9d2ea_100%)] text-[#1c1a20]">
      <div className="flex w-[178px] items-center pb-px pl-[25px]">
        <svg width="32" height="28" viewBox="0 0 32 28">
          <defs>
            <linearGradient id="cl" x1="0" y1="0" x2="0" y2="1"><stop offset="0" stopColor="#a9c4ea" /><stop offset="1" stopColor="#e9f0fa" /></linearGradient>
            <linearGradient id="dr" x1="0" y1="0" x2="1" y2="1"><stop offset="0" stopColor="#47c3f5" /><stop offset="1" stopColor="#0b84d6" /></linearGradient>
          </defs>
          <circle cx="15.500" cy="9" r="8.500" fill="url(#cl)" />
          <rect x="1" y="8" width="17" height="12" rx="6" fill="#dfe9f7" />
          <circle cx="24" cy="13" r="7" fill="#d5e2f3" />
          <path d="M8 19.500h17v-8H8z" fill="#e3ecf8" />
          <path d="M17 13.500c5 3.200 9.500 6 9.500 9.800a4.700 4.700 0 0 1-9.400 0z" fill="url(#dr)" />
        </svg>
        <div className="mb-px ml-[8px] flex flex-col text-[15px] leading-[20px] tracking-[-0.3px] whitespace-nowrap">
          <span>9°C</span>
          <span className="text-[#5a5260]">Lluvia suave</span>
        </div>
      </div>
      <TaskApps />
      <div className="ml-auto flex items-center pr-[23px] pb-px">
        <svg width="17" height="9" viewBox="0 0 17 9"><path d="M1 8l7.500-7L16 8" fill="none" stroke="#1c1a20" strokeWidth="1.500" /></svg>
        <svg className="-mt-[2px] ml-[11px]" width="21" height="15" viewBox="0 0 21 15"><path d="M5 14a4.200 4.200 0 0 1 0-8.300A6 6 0 0 1 15.500 4.500 4.800 4.800 0 0 1 16 14z" fill="#8f8d90" stroke="#1c1a20" strokeWidth="1.400" /><path d="M3 13.300C5 10 9 7.500 12 7.500c3.500 0 6 2 7.500 4-.5 1.200-2 1.800-3.500 1.800z" fill="#ecebed" /></svg>
        <div className="ml-[18px] flex w-[30px] flex-col items-center text-[15px] leading-[20px] tracking-[-0.3px]">
          <span>ESP</span>
          <span>LAA</span>
        </div>
        <svg className="ml-[22px]" width="21" height="21" viewBox="0 0 21 21" fill="none" stroke="#1c1a20" strokeWidth="1.300"><path d="M14 2H2.500C1.500 2 1 2.500 1 3.500V14c0 1 .5 1.500 1.500 1.500H16M4.500 19.500h9M7 15.500v4M11 15.500v4M17.500 8v12" /><path d="M15.500 1h4v5.500c0 1-.8 1.500-2 1.500s-2-.5-2-1.500zM15.500 4h4" /></svg>
        <svg className="ml-[9px]" width="21" height="17" viewBox="0 0 21 17" fill="none" stroke="#1c1a20" strokeWidth="1.300" strokeLinejoin="round"><path d="M1 6v5h3l4.500 4V2L4 6zM11.500 5.500q2 3 0 6M14 3.500q3.500 5 0 10M16.500 1.500q5.500 7 0 14" /></svg>
        <svg className="ml-[9px]" width="21" height="16" viewBox="0 0 21 16"><path d="M1 3h6v3.500C7 8 5.500 8.500 4 8.500S1 8 1 6.500zM2 .5v3M6 .5v3M4 8v6" fill="#1c1a20" stroke="#1c1a20" strokeWidth="1.300" /><path d="M8.500 3.500H16c1 0 1.700.7 1.700 1.700v6.600c0 1-.7 1.700-1.700 1.700H5.500" fill="none" stroke="#1c1a20" strokeWidth="1.300" /><path d="M9 5.500h7v6H6.500V9.500C8 9 9 8 9 6.500zM19 6.500h1.500v4H19z" fill="#1c1a20" /></svg>
        <div className="mb-[2px] ml-[19px] flex w-[77px] flex-col items-end text-[15px] leading-[20px] tracking-[-0.1px]">
          <span className="tracking-[-0.5px]">18:47</span>
          <span>22/06/2022</span>
        </div>
      </div>
    </div>
  );
}

/* ---------- page ---------- */

export default function App() {
  return (
    <div className="flex h-[1080px] w-[1920px] flex-col overflow-hidden bg-white font-['Open_Sans','Noto_Sans',sans-serif]">
      <TabStrip />
      <AddressBar />
      <Bookmarks />
      <div className="flex h-[891px] font-['Inter','Liberation_Sans',sans-serif]">
        <div className="relative flex w-[1596px] flex-col bg-[#eef1f6]">
          <Artboard />
          <div className="relative flex flex-1 flex-col justify-between pt-[18px] pr-[19px] pb-[21px] pl-[18px]">
            <div className="flex items-start">
              <Toolbox />
              <LibraryPanel />
            </div>
            <BottomBar />
          </div>
        </div>
        <Sidebar />
      </div>
      <Taskbar />
    </div>
  );
}
